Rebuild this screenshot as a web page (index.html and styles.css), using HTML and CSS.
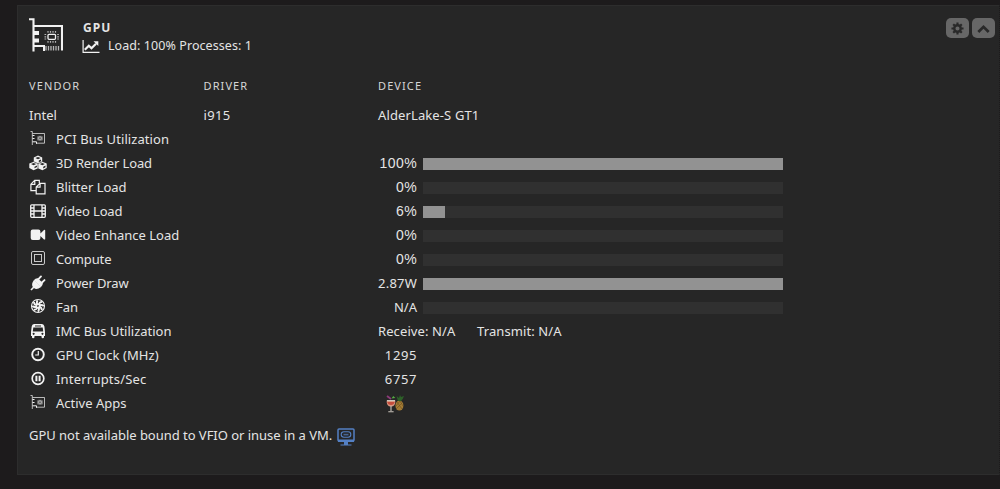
FILE: index.html
```html
<!DOCTYPE html>
<html lang="en">
<head>
<meta charset="utf-8">
<title>GPU</title>
<link rel="stylesheet" href="styles.css">
</head>
<body>
<svg class="defs" width="0" height="0">
  <symbol id="card" viewBox="0 0 34 34">
    <path d="M0 1.2H4.5V33.5M4.5 8H33V32.5" fill="none" stroke="currentColor" stroke-width="2.1"/>
    <path d="M5 13h5v4H5zM5 20.5h5v4H5z" fill="currentColor"/>
    <path d="M5 28H15V33" fill="none" stroke="currentColor" stroke-width="2"/>
    <path d="M17 28v4.5M19.5 28v4.5M22 28v4.5M24.5 28v4.5M27 28v4.5M29.5 28v4.5" stroke="currentColor" stroke-width="1.3" opacity=".7"/>
    <rect x="19" y="16.3" width="7.5" height="5" rx="1" fill="none" stroke="currentColor" stroke-width="1.3"/>
    <path d="M19 13v1.7M21.5 13v1.7M24 13v1.7M26.5 13v1.7M19 23v1.7M21.5 23v1.7M24 23v1.7M26.5 23v1.7M15.5 16.5h1.7M15.5 18.8h1.7M15.5 21h1.7M28.2 16.5h1.7M28.2 18.8h1.7M28.2 21h1.7" stroke="currentColor" stroke-width="1.2" opacity=".7"/>
  </symbol>
  <symbol id="smallcard" viewBox="0 0 16 16">
    <path d="M.5 1.5H2.3V15M2.5 3.5H14.5V13.2H6.5" fill="none" stroke="currentColor" stroke-width=".9" opacity=".8"/>
    <path d="M2.5 5.5h2M2.5 8.5h2M2.5 11.8h4v2" stroke="currentColor" fill="none"/>
    <rect x="7" y="5.8" width="6" height="5" rx="1.5" fill="currentColor" opacity=".35"/>
    <circle cx="10" cy="8.3" r="1.6" fill="none" stroke="currentColor" stroke-width=".8" opacity=".6"/>
  </symbol>
</svg>
<main class="panel">
  <header class="head">
    <svg class="logo"><use href="#card"/></svg>
    <div class="heading">
      <h1 class="title">GPU</h1>
      <div class="summary">
        <svg class="chart" viewBox="0 0 17 13"><path d="M.6 0V12.3H17" fill="none" stroke="currentColor" stroke-width="1.2"/><path d="M2.3 9.8 6.3 5.7 9 8.3 13.5 3.8" fill="none" stroke="currentColor" stroke-width="2.2"/><path d="M11 1.3h4.8V6z" fill="currentColor"/></svg>
        <span class="load">Load: 100% Processes: 1</span>
      </div>
    </div>
    <div class="controls">
      <span class="button"><svg viewBox="0 0 14 14"><circle cx="7" cy="7" r="3.5" fill="none" stroke="currentColor" stroke-width="2.6"/><path d="M7 .5v2.4M7 11.1v2.4M.5 7h2.4M11.1 7h2.4M2.4 2.4l1.7 1.7M9.9 9.9l1.7 1.7M11.6 2.4 9.9 4.1M4.1 9.9l-1.7 1.7" stroke="currentColor" stroke-width="2.3"/></svg></span>
      <span class="button"><svg viewBox="0 0 14 14"><path d="M1.4 10.8 7 5.2l5.6 5.6" fill="none" stroke="currentColor" stroke-width="2.9"/></svg></span>
    </div>
  </header>
  <div class="grid columns"><span>VENDOR</span><span>DRIVER</span><span>DEVICE</span></div>
  <div class="grid row"><span>Intel</span><span class="driver">i915</span><span class="device">AlderLake-S GT1</span></div>
  <div class="row"><svg class="icon raised"><use href="#smallcard"/></svg><span class="label loose">PCI Bus Utilization</span></div>
  <div class="row"><svg class="icon wide" viewBox="0 0 18 16"><path d="M9 .6 13.2 2.4V6.8L17.7 8.6V13L13.4 15.3 9 13.2 4.6 15.3.3 13V8.6L4.8 6.8V2.4z" fill="currentColor"/><path d="M6.3 3.1 9 2l2.7 1.1L9 4.2zM2 9l2.6-1.1L7.2 9l-2.6 1.2zM10.7 9l2.6-1.1L15.9 9l-2.6 1.2zM9.8 5.6l2.2-1v1.7L9.8 7.3zM5.5 11.8 8 10.5V12l-2.5 1.3zM14.2 11.8l2.3-1.3v1.8L14.2 13.5z" fill="#262626"/><path d="M9 8.6v4.6M4.8 6.8 9 8.6l4.2-1.8" fill="none" stroke="#262626" stroke-width=".6"/></svg><span class="label tight">3D Render Load</span><span class="value percent">100%</span><span class="bar"><i class="fill" style="width:100%"></i></span></div>
  <div class="row"><svg class="icon" viewBox="0 0 16 16"><g fill="none" stroke="currentColor" stroke-width="1.2"><path d="M6.2 11.7H.9V5.2L4.7 1.4h4.6v2.8M.9 5.3h3.9V1.4M6.2 14.8V8.1L10 4.3h5v10.5zM6.2 8.2h3.9V4.3"/></g></svg><span class="label">Blitter Load</span><span class="value percent">0%</span><span class="bar"></span></div>
  <div class="row"><svg class="icon" viewBox="0 0 16 16"><g fill="none" stroke="currentColor" stroke-width="1.3"><rect x=".7" y="1.8" width="14.6" height="12.5" rx="1"/><path d="M4 2v12M12 2v12M4 8h8M1 5h3M1 8h3M1 11h3M12 5h3M12 8h3M12 11h3"/></g></svg><span class="label tight">Video Load</span><span class="value percent">6%</span><span class="bar"><i class="fill" style="width:6%"></i></span></div>
  <div class="row"><svg class="icon" viewBox="0 0 16 16"><path d="M2.7 2.5h5.7q2 0 2 2v2L14 3q1.2-.5 1.2.6v8.3q0 1-1.2.5l-3.6-3.3v2q0 2-2 2H2.7q-2 0-2-2V4.5q0-2 2-2" fill="currentColor"/></svg><span class="label">Video Enhance Load</span><span class="value percent">0%</span><span class="bar"></span></div>
  <div class="row"><svg class="icon raised" viewBox="0 0 16 16"><g fill="none" stroke="currentColor" opacity=".8"><rect x="1.5" y="1.5" width="13" height="13" rx="1.5"/><rect x="4.5" y="4.5" width="7" height="7"/></g></svg><span class="label tight">Compute</span><span class="value percent">0%</span><span class="bar"></span></div>
  <div class="row"><svg class="icon" viewBox="0 0 16 16"><path d="M4 5 11 12Q6.6 15.2 4 13L1.6 15.5.4 14.4 2.8 12Q.9 9 4 5" fill="currentColor"/><path d="M3.8 5.2 10.8 12.2Q13 10.5 12.8 8L8 3.2Q5.5 3 3.8 5.2" fill="currentColor"/><path d="m8 4.6 3-3.2M11.2 8.3l3.3-3.2" stroke="currentColor" stroke-width="1.9" stroke-linecap="round"/></svg><span class="label tight">Power Draw</span><span class="value watts">2.87W</span><span class="bar"><i class="fill" style="width:100%"></i></span></div>
  <div class="row"><svg class="icon raised" viewBox="0 0 16 16"><circle cx="8" cy="8" r="6.5" fill="none" stroke="currentColor" stroke-width="1.1"/><g stroke="currentColor" stroke-width="1.8" fill="none"><path d="M8 7Q6 5 7.5 2.3M9 7q0-3 3.2-3.1M9 8q2-2 4.8 0M8.8 9q3 0 3 3M8 9q2 2 0 4.7M7 9q0 3-3.2 2.7M7 8q-2 2-4.7 0M7 7Q4 7 4 4"/></g></svg><span class="label">Fan</span><span class="value">N/A</span><span class="bar"></span></div>
  <div class="row"><svg class="icon" viewBox="0 0 16 16"><path fill-rule="evenodd" d="M4 1h8q2 0 2.4 2.5L15 9v4h-1v1.3q0 1-1.2 1T11.5 14v-1h-7v1q0 1.3-1.3 1.3T2 14.3V13H1V9l.7-5.5Q2 1 4 1M5 2.4v1h6v-1zM3.3 4.5l-.5 4h10.4l-.5-4zM3.6 9.8a1 1 0 1 0 .1 0M12.4 9.8a1 1 0 1 0 .1 0" fill="currentColor"/></svg><span class="label">IMC Bus Utilization</span><span class="bus">Receive: N/A</span><span class="transmit">Transmit: N/A</span></div>
  <div class="row"><svg class="icon" viewBox="0 0 16 16"><circle cx="8" cy="7.5" r="5.8" fill="none" stroke="currentColor" stroke-width="1.9"/><path d="M8.3 4v4H5.2" fill="none" stroke="currentColor" stroke-width="1.2"/></svg><span class="label loose">GPU Clock (MHz)</span><span class="value number">1295</span></div>
  <div class="row"><svg class="icon" viewBox="0 0 16 16"><circle cx="8" cy="7.5" r="5.8" fill="none" stroke="currentColor" stroke-width="1.7"/><path d="M6.4 4.8v5.4M9.6 4.8v5.4" stroke="currentColor" stroke-width="2"/></svg><span class="label interrupts">Interrupts/Sec</span><span class="value number">6757</span></div>
  <div class="row"><svg class="icon raised"><use href="#smallcard"/></svg><span class="label">Active Apps</span><span class="app"><svg viewBox="0 0 18 18"><ellipse cx="13.4" cy="10.6" rx="4" ry="5" fill="#a37b35"/><path d="m11 7 5 7M14 6l3 5M16 8l-6 6M14 6l-4 5" stroke="#725420" stroke-width=".7"/><path d="m10.5 1 2.5 2 1-3 1 2 3-1-1.3 3L15 6h-3z" fill="#2d6028"/><path d="M.7 5.5h8.6Q9.7 11.5 5 11.5T.7 5.5" fill="#d99a83"/><path d="M1.2 7h7.5q-.5 3-3.7 3T1.2 7" fill="#c64d3d"/><path d="M1 5.5h8M5 11v5M2.3 16.8h5.3" stroke="#cbc5bd" stroke-width="1.1"/><path d="m1 1 4 3" stroke="#8c3b79" stroke-width="1.8"/><path d="M5.5 3.5 7.3 1l2 2z" fill="#55ad42"/></svg></span></div>
  <footer class="note"><span class="notetext">GPU not available bound to VFIO or inuse in a VM.</span><svg class="monitor" viewBox="0 0 18 18"><path d="M2 1h14q1 0 1 1v10q0 1-1 1H2q-1 0-1-1V2q0-1 1-1" fill="none" stroke="currentColor" stroke-width="1.5"/><path d="M1 11.5h16V14H1zM7 14h4v2.4h3.5v1.2h-11v-1.2H7z" fill="currentColor"/><rect x="4.2" y="3.8" width="9.6" height="5.4" rx="2.7" fill="none" stroke="currentColor" stroke-width="1.1"/><path d="M6.5 5.8h5v1.6h-5z" fill="currentColor" opacity=".7"/></svg></footer>
</main>
</body>
</html>
```
FILE: styles.css
```css
* { box-sizing: border-box; }
body {
  margin: 0;
  height: 489px;
  overflow: hidden;
  padding: 5px 0 0 17px;
  background: #1d1b1c;
  color: #e4e4e4;
  font: 13px/24px "Noto Sans", sans-serif;
}
.defs { position: absolute; }
.panel {
  height: 470px;
  padding: 0 0 0 11px;
  background: #262626;
  border: 1px solid #2d2d2d;
  border-right: 1px dotted #1d1b1c;
}
svg { display: block; flex: none; color: #f2f2f2; }
.head { display: flex; height: 68px; padding-top: 12px; }
.logo { width: 34px; height: 34px; }
.heading { margin: 1px 0 0 19px; }
.title { margin: 0 0 0 1px; font-size: 12px; line-height: 18px; font-weight: 700; letter-spacing: 1px; }
.summary { display: flex; align-items: center; gap: 8px; height: 18px; line-height: 18px; }
.chart { width: 18px; height: 13px; }
.load { letter-spacing: .07px; font-size: 12.5px; }
.controls { display: flex; gap: 3px; margin: 0 4px 0 auto; }
.button { width: 23px; height: 20px; border-radius: 5px; background: #676767; display: grid; place-items: center; }
.button svg { width: 13px; height: 13px; color: #292929; }
.grid { display: grid; grid-template-columns: 174.5px 174.5px 1fr; }
.columns { font-size: 11px; letter-spacing: 1.1px; height: 29px; color: #d6d6d6; }
.row { height: 24px; white-space: nowrap; }
.row:not(.grid) { display: flex; align-items: center; }
.driver { letter-spacing: .35px; }
.device { letter-spacing: .12px; }
.icon { width: 16px; height: 16px; margin: 0 9px 0 1px; }
.icon.wide { width: 18px; margin: 0 8px 0 0; }
.icon.raised { margin-top: -3px; }
.label { width: 317px; margin-left: 1px; }
.tight { letter-spacing: -.13px; }
.loose { letter-spacing: .08px; }
.interrupts { letter-spacing: .2px; }
.value { width: 44px; text-align: right; }
.percent { font-family: "Liberation Sans", sans-serif; font-size: 14px; letter-spacing: .4px; }
.watts { letter-spacing: .2px; }
.number { letter-spacing: .6px; }
.bar { width: 360px; height: 12px; margin: 2px 0 0 6px; background: #303030; }
.fill { display: block; height: 100%; background: #929292; }
.bus { width: 104px; padding-left: 5px; letter-spacing: .1px; }
.transmit { letter-spacing: .1px; }
.app { padding-left: 13px; }
.app svg { width: 18px; height: 18px; margin-top: 2px; }
.note { display: flex; align-items: center; gap: 5px; margin-top: 8px; height: 24px; }
.notetext { letter-spacing: -.03px; }
.monitor { width: 18px; height: 18px; color: #5480c4; margin-top: 3px; }
```
